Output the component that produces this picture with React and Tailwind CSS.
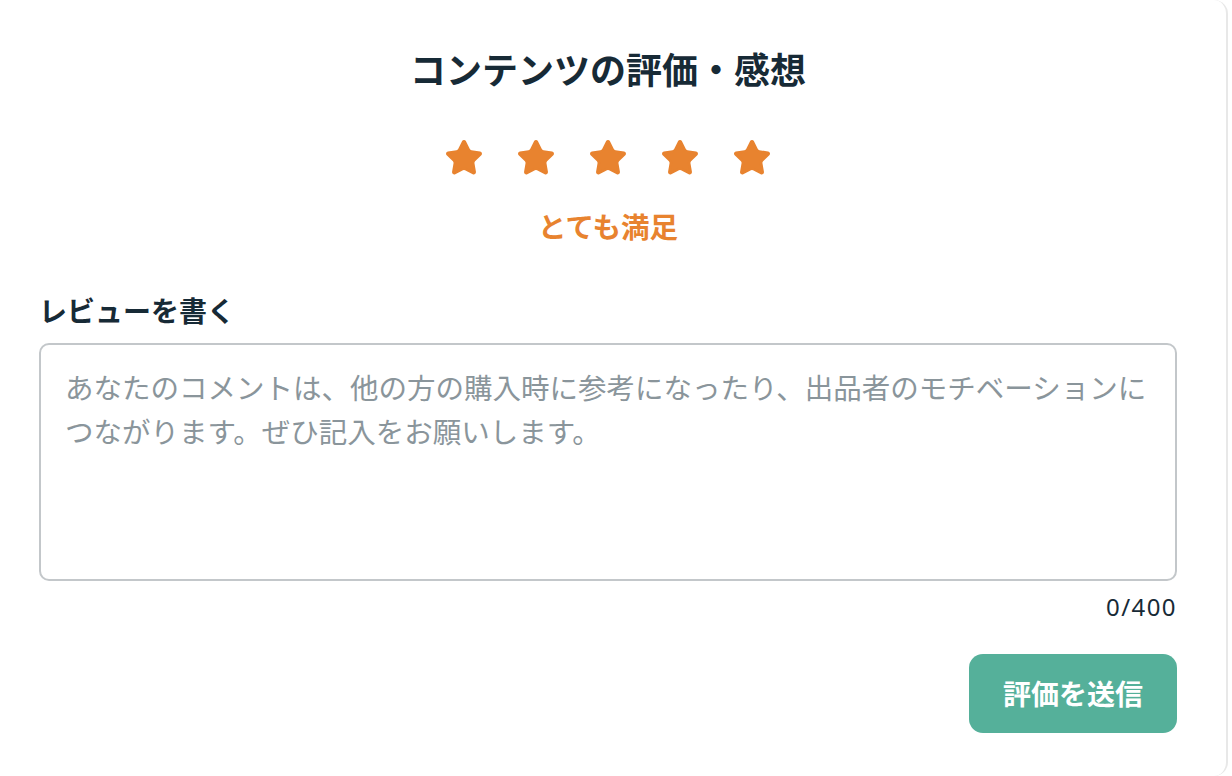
import React, { useState } from "react";

const Star = () => (
  <svg width="40" height="40" viewBox="0 0 24 24" fill="#e8832f" stroke="#e8832f" strokeWidth="1.6" strokeLinejoin="round">
    <path d="M11.525 2.295a.53.53 0 0 1 .95 0l2.31 4.679a2.123 2.123 0 0 0 1.595 1.16l5.166.756a.53.53 0 0 1 .294.904l-3.736 3.638a2.123 2.123 0 0 0-.611 1.878l.882 5.14a.53.53 0 0 1-.771.56l-4.618-2.428a2.122 2.122 0 0 0-1.973 0L6.396 21.01a.53.53 0 0 1-.77-.56l.881-5.139a2.122 2.122 0 0 0-.611-1.879L2.16 9.795a.53.53 0 0 1 .294-.906l5.165-.755a2.122 2.122 0 0 0 1.597-1.16z" />
  </svg>
);

const App = () => {
  const [text, setText] = useState("");

  return (
    <div className="min-h-screen bg-white font-['Noto_Sans','Noto_Sans_CJK_JP',sans-serif]">
      <div className="w-[1228px] h-[776px] border-r-2 border-[#e8e8e8] rounded-r-[14px] pl-[39px] pr-[49px] pt-[49px] flex flex-col">
        <h1 className="text-center text-[36px] leading-[44px] font-bold text-[#172a36]">
          コンテンツの評価・感想
        </h1>

        <div className="mt-[47px] flex justify-center gap-[32px] h-[36px] items-center">
          {[1, 2, 3, 4, 5].map((n) => (
            <Star key={n} />
          ))}
        </div>

        <p className="mt-[33px] text-center text-[28.5px] leading-[36px] font-bold text-[#e8832f]">
          とても満足
        </p>

        <label className="mt-[48px] text-[28px] leading-[36px] font-bold text-[#172a36]">
          レビューを書く
        </label>

        <textarea
          value={text}
          onChange={(e) => setText(e.target.value)}
          maxLength={400}
          placeholder="あなたのコメントは、他の方の購入時に参考になったり、出品者のモチベーションにつながります。ぜひ記入をお願いします。"
          className="mt-[14px] h-[238px] w-full resize-none rounded-[10px] border-2 border-[#c3c7ca] pl-[24px] pr-[20px] pt-[21px] text-[28.5px] leading-[44px] text-[#172a36] placeholder:text-[#8a959b] outline-none"
        />

        <p className="mt-[12px] text-right text-[24px] leading-[28px] tracking-[0.06em] text-[#172a36]">
          {text.length}/400
        </p>

        <div className="mt-[33px] flex justify-end">
          <button className="w-[208px] h-[79px] rounded-[14px] bg-[#55b09a] text-white text-[28px] font-bold">
            評価を送信
          </button>
        </div>
      </div>
    </div>
  );
};

export default App;
